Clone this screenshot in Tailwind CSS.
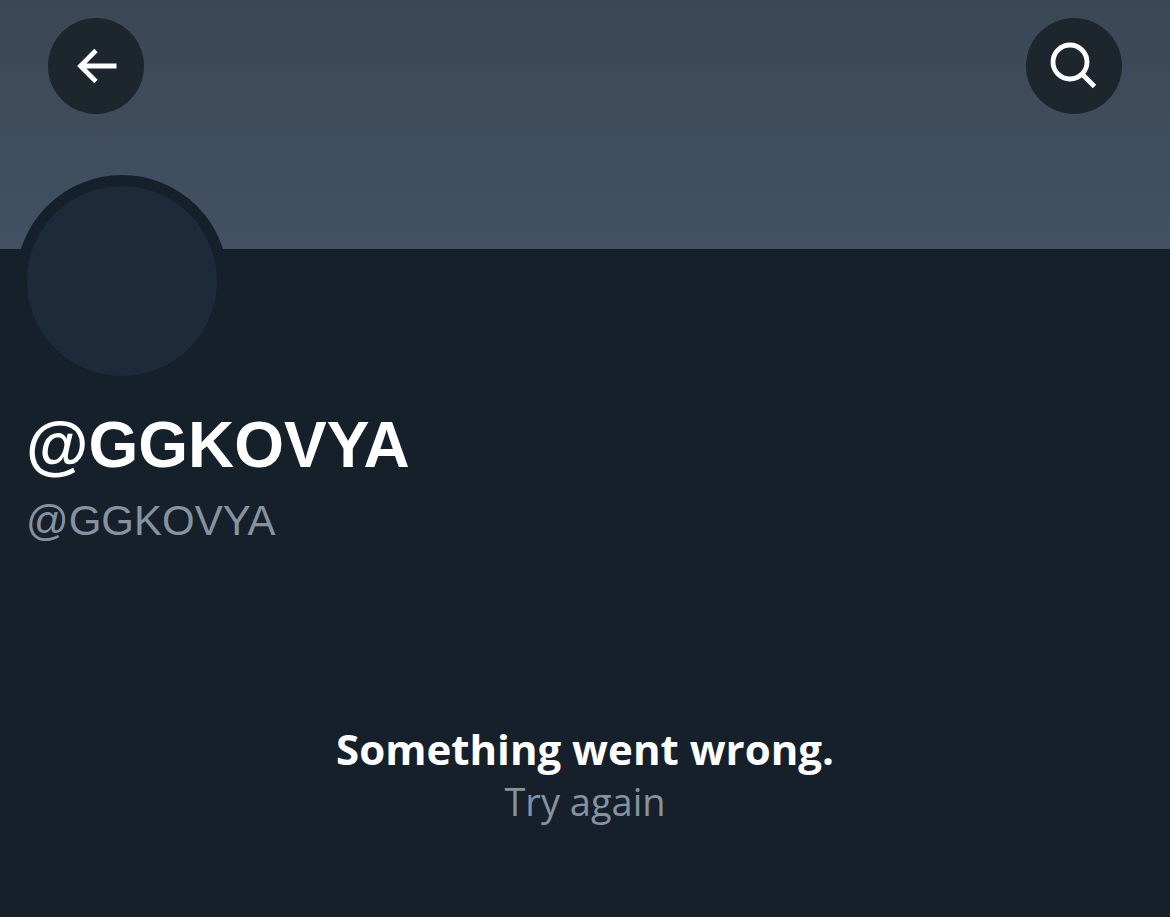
<!DOCTYPE html>
<html lang="en">
<head>
  <meta charset="UTF-8">
  <meta name="viewport" content="width=device-width, initial-scale=1.0">
  <title>@GGKOVYA</title>
  <script src="https://cdn.jsdelivr.net/npm/@tailwindcss/browser@4"></script>
</head>
<body class="bg-[#16202a] font-['Liberation_Sans',sans-serif]">
  <div class="min-h-screen flex flex-col">
    <!-- Banner -->
    <header class="h-[249px] px-12 pt-[18px] flex justify-between items-start bg-linear-to-b from-[#3a4755] to-[#425263]">
      <button type="button" aria-label="Back" class="size-24 rounded-full bg-[#1d252d] text-white">
        <svg class="size-24" viewBox="0 0 96 96" fill="none" stroke="currentColor" stroke-width="4.8">
          <path d="M68.5 48H33M48 32.5L32.5 48L48 63.5" />
        </svg>
      </button>
      <button type="button" aria-label="Search" class="size-24 rounded-full bg-[#1d252d] text-white">
        <svg class="size-24" viewBox="0 0 96 96" fill="none" stroke="currentColor" stroke-width="4.8">
          <circle cx="44" cy="44" r="17" />
          <path d="M56 56L68.5 68.5" />
        </svg>
      </button>
    </header>

    <main class="flex-grow">
      <!-- Profile -->
      <section>
        <div class="size-[212px] -mt-[74px] ml-4 rounded-full border-[11px] border-[#16202a] bg-[#1d2a39]"></div>
        <div class="px-[26px] pt-[22px]">
          <h1 class="text-[64px] leading-[72px] font-bold text-white">@GGKOVYA</h1>
          <p class="pt-4 text-[42px] leading-[48px] text-[#8593a1]">@GGKOVYA</p>
        </div>
      </section>

      <!-- Error message -->
      <section class="pt-[176px] pb-16 flex flex-col items-center font-['Open_Sans',sans-serif]">
        <h2 class="text-[42px] leading-[56px] font-bold text-white">Something went wrong.</h2>
        <button type="button" class="text-[38px] leading-[48px] text-[#8593a1]">Try again</button>
      </section>
    </main>
  </div>
</body>
</html>
